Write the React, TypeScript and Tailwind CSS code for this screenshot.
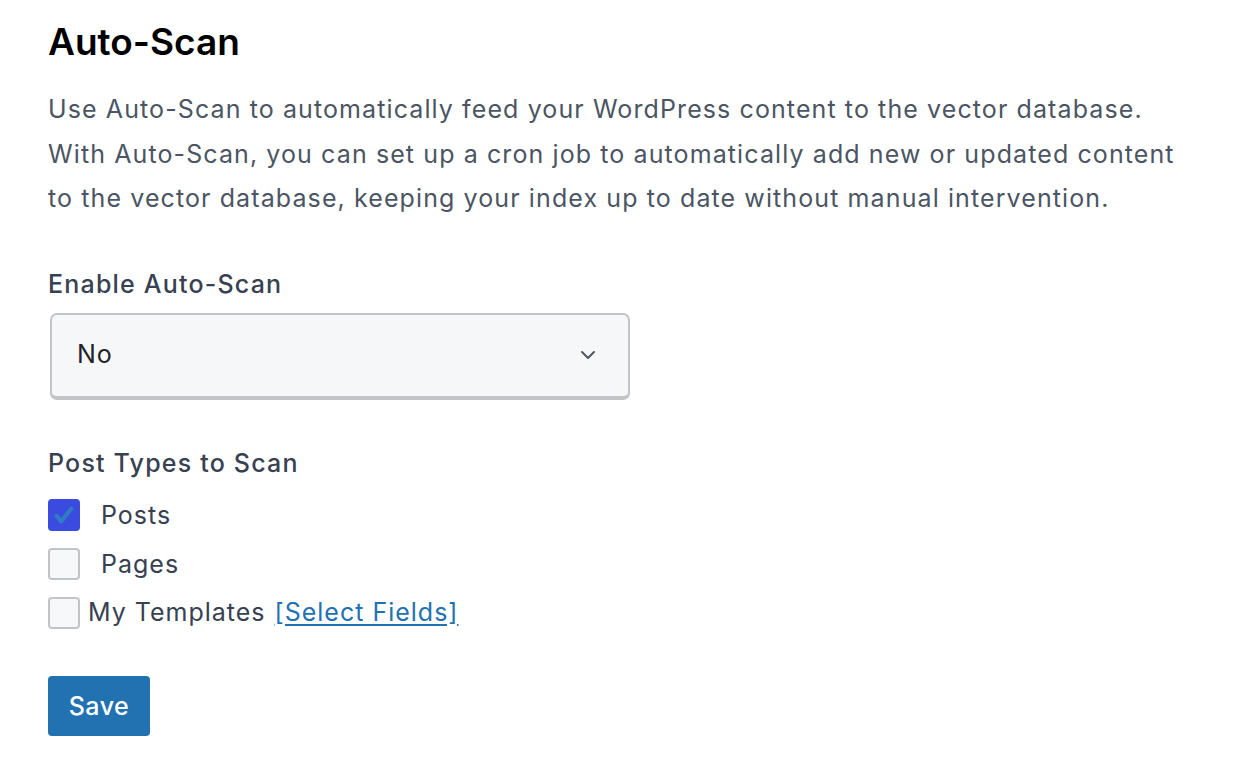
export default function App() {
  const font = { fontFamily: 'Inter, "Noto Sans", sans-serif' };
  return (
    <div className="min-h-[758px] bg-white px-12 pt-[18px]" style={font}>
      <h1 className="text-[37px] leading-[48px] font-semibold text-black tracking-[0px]">Auto-Scan</h1>

      <p className="mt-[21px] text-[25px] leading-[44.5px] tracking-[1.1px] text-[#4b5563] max-w-[1160px]">
        Use Auto-Scan to automatically feed your WordPress content to the vector database.
        <br />
        With Auto-Scan, you can set up a cron job to automatically add new or updated content
        <br />
        to the vector database, keeping your index up to date without manual intervention.
      </p>

      {/* Enable toggle */}
      <div className="mt-[47px] text-[25px] leading-8 tracking-[1.2px] font-medium text-[#374151]">Enable Auto-Scan</div>
      <div className="mt-[13px] ml-[2px] w-[580px] h-[87px] rounded-[7px] border-2 border-b-4 border-[#c3c4c7] bg-[#f6f7f9] flex items-center justify-between pl-[25px] pr-[28px]">
        <span className="text-[25px] tracking-[1px] text-[#1f2328]">No</span>
        <svg width="24" height="24" viewBox="0 0 24 24" fill="none" stroke="#50575e" strokeWidth="2" strokeLinecap="round" strokeLinejoin="round">
          <path d="M6 9l6 6 6-6" />
        </svg>
      </div>

      {/* Post types */}
      <div className="mt-[47px] text-[25px] leading-8 tracking-[1.2px] font-medium text-[#374151]">Post Types to Scan</div>
      <div className="mt-[20px] flex flex-col gap-[17px]">
        <label className="flex items-center h-8">
          <span className="w-8 h-8 rounded-[4px] bg-[#3b4be0] flex items-center justify-center">
            <svg width="22" height="22" viewBox="0 0 24 24" fill="none" stroke="#2f7dc2" strokeWidth="4.5" strokeLinecap="round" strokeLinejoin="round">
              <path d="M4 13l5 6L20 5" />
            </svg>
          </span>
          <span className="ml-[21px] pt-[2px] text-[25px] tracking-[1px] text-[#374151]">Posts</span>
        </label>
        <label className="flex items-center h-8">
          <span className="w-8 h-8 rounded-[4px] border-2 border-[#c3c4c7] bg-[#f7f8fa]" />
          <span className="ml-[21px] pt-[2px] text-[25px] tracking-[1px] text-[#374151]">Pages</span>
        </label>
        <label className="flex items-center h-8">
          <span className="w-8 h-8 rounded-[4px] border-2 border-[#c3c4c7] bg-[#f7f8fa]" />
          <span className="ml-2 text-[25px] tracking-[1px] text-[#374151]">My Templates</span>
          <a href="#" className="ml-[9px] text-[25px] tracking-[1px] text-[#2271b1] underline underline-offset-[3px]">[Select Fields]</a>
        </label>
      </div>

      <button className="mt-[47px] h-[60px] w-[102px] pt-[3px] rounded-[4px] bg-[#2271b1] text-white text-[25px] tracking-[0.5px] font-medium">
        Save
      </button>
    </div>
  );
}
